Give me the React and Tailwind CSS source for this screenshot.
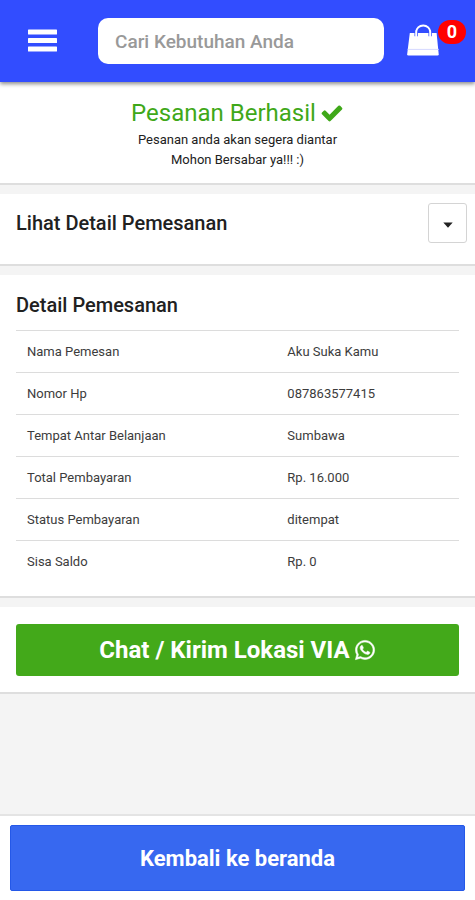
// src/App.jsx
import React, { useState } from 'react';
import { FaWhatsapp } from 'react-icons/fa';

const details = [
  { label: 'Nama Pemesan', value: 'Aku Suka Kamu' },
  { label: 'Nomor Hp', value: '087863577415' },
  { label: 'Tempat Antar Belanjaan', value: 'Sumbawa' },
  { label: 'Total Pembayaran', value: 'Rp. 16.000' },
  { label: 'Status Pembayaran', value: 'ditempat' },
  { label: 'Sisa Saldo', value: 'Rp. 0' },
];

function MenuIcon() {
  return (
    <svg width="30" height="24" viewBox="0 0 30 24" fill="currentColor" aria-hidden="true">
      <rect x="1" y="0.5" width="29" height="5" rx="0.6" />
      <rect x="1" y="9" width="29" height="5" rx="0.6" />
      <rect x="1" y="17.5" width="29" height="5" rx="0.6" />
    </svg>
  );
}

function BagIcon() {
  return (
    <svg width="34" height="32" viewBox="0 0 34 32" aria-hidden="true">
      <path d="M3.8 9h26.8l2.1 21.2q0.1 1.3-1.2 1.3H2.4q-1.3 0-1.2-1.3z" fill="#fff" />
      <path d="M1.7 25.4h31" stroke="#d5d8ff" strokeWidth="1" />
      <path d="M10.2 12.2V8M24.2 12.2V8" stroke="#324dff" strokeWidth="3.4" />
      <path
        d="M10.2 12.2V8.2a7 6.8 0 0 1 14 0v4"
        fill="none"
        stroke="#fff"
        strokeWidth="2"
        strokeLinecap="round"
      />
    </svg>
  );
}

function CheckIcon() {
  return (
    <svg className="w-6 h-6" viewBox="0 0 1792 1792" fill="currentColor" aria-hidden="true">
      <path d="M1671 566q0 40-28 68l-724 724-136 136q-28 28-68 28t-68-28l-136-136-362-362q-28-28-28-68t28-68l136-136q28-28 68-28t68 28l294 295 656-657q28-28 68-28t68 28l136 136q28 28 28 68z" />
    </svg>
  );
}

function Section({ className = '', children }) {
  return (
    <section className={`bg-white border-b-2 border-[#dedede] ${className}`}>{children}</section>
  );
}

function App() {
  const [open, setOpen] = useState(true);

  return (
    <div className="flex flex-col min-h-screen bg-[#f4f4f4] text-[#212121] font-['Roboto',sans-serif]">
      <header className="relative flex items-center h-[82px] pl-[27px] pr-[9px] bg-[#324dff] shadow-[0_2px_4px_rgba(0,0,0,0.45)]">
        <button type="button" aria-label="Menu" className="text-white">
          <MenuIcon />
        </button>
        <input
          type="text"
          aria-label="Cari Kebutuhan Anda"
          placeholder="Cari Kebutuhan Anda"
          className="flex-1 min-w-0 h-[46px] ml-[41px] mr-[22px] px-[17px] bg-white rounded-[10px] text-[19px] font-medium placeholder:text-[#999] outline-none"
        />
        <a href="#keranjang" aria-label="Keranjang" className="flex items-start pb-[3px]">
          <BagIcon />
          <span className="flex items-center justify-center w-7 h-6 -mt-1 -ml-[2px] rounded-full bg-[#ff0000] text-white text-lg font-bold">
            0
          </span>
        </a>
      </header>

      <main className="flex-1 flex flex-col gap-[9px]">
        <Section className="pt-[17px] pb-[13px] text-center">
          <h1 className="flex items-center justify-center gap-1 text-2xl leading-7 text-[#3fa819]">
            Pesanan Berhasil <CheckIcon />
          </h1>
          <p className="text-[13px] leading-5 pt-[3px]">
            Pesanan anda akan segera diantar
            <br />
            Mohon Bersabar ya!!! :)
          </p>
        </Section>

        <Section className="flex items-start justify-between pl-4 pr-2 pt-[9px] pb-[21px]">
          <h2 className="pt-2 text-xl leading-6 font-medium">Lihat Detail Pemesanan</h2>
          <button
            type="button"
            aria-label="Buka detail pemesanan"
            aria-expanded={open}
            onClick={() => setOpen(!open)}
            className="flex items-center justify-center w-[39px] h-10 pt-1 border border-[#d4d4d4] rounded-[3px] bg-white"
          >
            <svg width="10" height="6" viewBox="0 0 10 6" fill="#222" aria-hidden="true">
              <path d="M0.3 0.5h9.4L5 5.7z" />
            </svg>
          </button>
        </Section>

        {open && (
          <Section className="px-4 pt-[18px] pb-[13px]">
            <h2 className="text-xl leading-6 font-medium">Detail Pemesanan</h2>
            <table className="w-full mt-[13px] table-fixed border-collapse text-[13px] leading-5 text-[#3c3c3c]">
              <tbody>
                {details.map((row) => (
                  <tr key={row.label} className="h-[42px] border-t border-[#dcdcdc]">
                    <th scope="row" className="w-[59%] pl-[11px] text-left font-normal">
                      {row.label}
                    </th>
                    <td className="pl-[10px]">{row.value}</td>
                  </tr>
                ))}
              </tbody>
            </table>
          </Section>
        )}

        <Section className="px-4 pt-[17px] pb-4">
          <a
            href="#chat"
            className="flex items-center justify-center gap-1 h-[52px] rounded-[3px] bg-[#43a91a] text-white text-2xl font-bold"
          >
            Chat / Kirim Lokasi VIA{' '}
            <FaWhatsapp className="w-[22px] h-[22px] overflow-visible" stroke="#fff" strokeWidth="12" />
          </a>
        </Section>
      </main>

      <footer className="px-[10px] pt-[9px] pb-[9px] bg-white border-t-2 border-[#e4e4e4]">
        <a
          href="#beranda"
          className="flex items-center justify-center h-[66px] rounded-[2px] border border-[#2458e8] bg-[#3768f0] text-white text-[22px] font-bold"
        >
          Kembali ke beranda
        </a>
      </footer>
    </div>
  );
}

export default App;
